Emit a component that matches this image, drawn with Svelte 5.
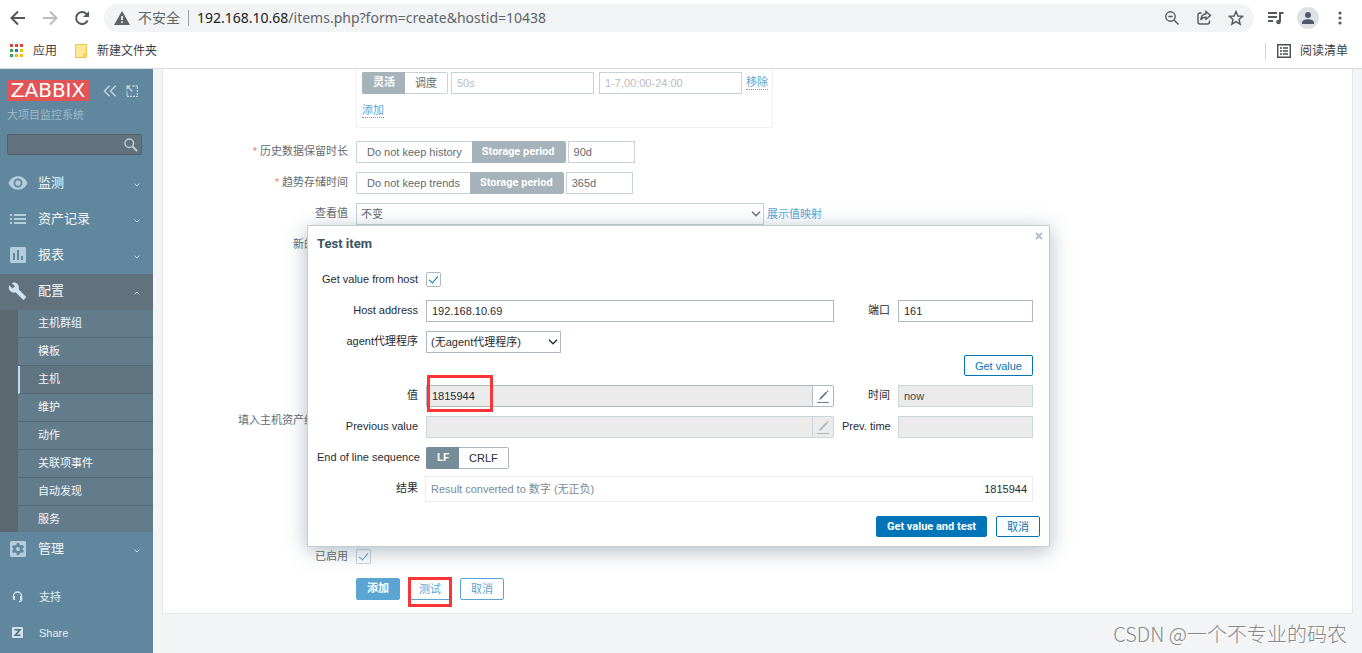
<script lang="ts">
  interface MenuItem {
    label: string
    icon: 'eye' | 'list' | 'chart' | 'wrench' | 'gear'
    open?: boolean
    children?: string[]
  }

  const menu: MenuItem[] = [
    { label: '监测', icon: 'eye' },
    { label: '资产记录', icon: 'list' },
    { label: '报表', icon: 'chart' },
    {
      label: '配置',
      icon: 'wrench',
      open: true,
      children: ['主机群组', '模板', '主机', '维护', '动作', '关联项事件', '自动发现', '服务']
    },
    { label: '管理', icon: 'gear' }
  ]

  const appColors = ['#ea4335', '#ea4335', '#ea4335', '#34a853', '#1a73e8', '#fbbc04', '#34a853', '#fbbc04', '#fbbc04']

  let selectedPage = $state('主机')
  let intervalType = $state('flexible')
  let history = $state('period')
  let trends = $state('period')
  let eol = $state('lf')
  let fromHost = $state(true)
  let enabled = $state(true)
</script>

{#snippet segments(name: string, options: [string, string][], value: string, onpick: (v: string) => void)}
  <span class="segments">
    {#each options as [key, text]}
      <input type="radio" id="{name}-{key}" {name} value={key} checked={value === key} onchange={() => onpick(key)} />
      <label for="{name}-{key}">{text}</label>
    {/each}
  </span>
{/snippet}

{#snippet chevron()}
  <svg class="select-arrow" width="10" height="6" viewBox="0 0 10 6"><path d="M1 .7 5 4.8 9 .7" /></svg>
{/snippet}

{#snippet pencil()}
  <svg width="14" height="14" viewBox="0 0 14 14">
    <path d="M1 13.5h12" stroke="currentColor" />
    <path d="M3 11 4 8.5 10 2.5 11.3 3.8 5.3 9.9zM10.6 1.9 11.4 1.1 12.7 2.4 11.9 3.2z" fill="currentColor" />
  </svg>
{/snippet}

<div class="window">
  <header class="browser">
    <div class="toolbar">
      <button class="tool" aria-label="Back">
        <svg width="16" height="16" viewBox="0 0 16 16"><path d="M15 8H2M8 1.5 1.5 8 8 14.5" /></svg>
      </button>
      <button class="tool faded" aria-label="Forward">
        <svg width="16" height="16" viewBox="0 0 16 16"><path d="M1 8h13M8 1.5 14.5 8 8 14.5" /></svg>
      </button>
      <button class="tool" aria-label="Reload">
        <svg width="16" height="16" viewBox="0 0 16 16"><path d="M13.6 10.5A6 6 0 1 1 12.4 3.9L14 5.5" /><path class="solid" d="M15 1v6H9z" /></svg>
      </button>
      <div class="omnibox">
        <svg width="16" height="14" viewBox="0 0 16 14"><path fill="#5f6368" d="M8 0 16 14H0z" /><path stroke="#fff" stroke-width="1.6" d="M8 5v4M8 10.3v1.6" /></svg>
        <span class="insecure">不安全</span>
        <span class="bar"></span>
        <span class="url"><b>192.168.10.68</b>/items.php?form=create&amp;hostid=10438</span>
        <button class="tool thin" aria-label="Zoom">
          <svg width="16" height="16" viewBox="0 0 16 16"><circle cx="6.5" cy="6.5" r="4.7" /><path d="M10 10l4.5 4.5M4.3 6.5h4.4" /></svg>
        </button>
        <button class="tool thin" aria-label="Share page">
          <svg width="16" height="16" viewBox="0 0 16 16"><path d="M5.5 3H4a2 2 0 0 0-2 2v7a2 2 0 0 0 2 2h7.5a2 2 0 0 0 2-2v-1.5" /><path d="M10 1.5 14.5 5.5 10 9.3V7.2C7.500 7.2 6 8 4.8 10 5 6.5 7 4.3 10 3.8z" /></svg>
        </button>
        <button class="tool thin" aria-label="Bookmark">
          <svg width="16" height="16" viewBox="0 0 16 16"><path d="M8 1.5 9.9 6 14.7 6.3 11 9.4 12.2 14.2 8 11.6 3.8 14.2 5 9.4 1.3 6.3 6.1 6z" /></svg>
        </button>
      </div>
      <button class="tool" aria-label="Media">
        <svg width="17" height="14" viewBox="0 0 17 14"><path d="M1 2h9M1 6h9M1 10h5M13 11V2h3.5" /><circle class="solid" cx="11.5" cy="11" r="2.3" /></svg>
      </button>
      <button class="tool avatar" aria-label="Profile">
        <svg width="14" height="14" viewBox="0 0 14 14"><circle cx="7" cy="4" r="3" /><path d="M1 13v-1.5C1 9 5 8.3 7 8.3s6 .7 6 3.2V13z" /></svg>
      </button>
      <button class="tool" aria-label="Menu">
        <svg width="16" height="16" viewBox="0 0 16 16"><circle class="solid" cx="8" cy="3" r="1.6" /><circle class="solid" cx="8" cy="8" r="1.6" /><circle class="solid" cx="8" cy="13" r="1.6" /></svg>
      </button>
    </div>
    <div class="bookmarks">
      <a href="#apps">
        <svg width="14" height="14" viewBox="0 0 14 14">
          {#each appColors as color, i}
            <rect x={(i % 3) * 5} y={Math.floor(i / 3) * 5} width="3" height="3" fill={color} />
          {/each}
        </svg>
        应用
      </a>
      <a href="#folder">
        <svg width="14" height="14" viewBox="0 0 14 14"><path d="M1.5.5h11v13h-11z" fill="#ffe796" stroke="#ecc94e" /><path d="M10 13.5V10h2.5" fill="none" stroke="#e5b93c" /></svg>
        新建文件夹
      </a>
      <a class="reading" href="#reading">
        <svg width="14" height="14" viewBox="0 0 14 14"><path d="M.7 .7h12.6v12.6H.7zM3 4h2M6 4h5M3 7h2M6 7h5M3 10h2M6 10h5" fill="none" stroke="#4a4d51" stroke-width="1.4" /></svg>
        阅读清单
      </a>
    </div>
  </header>

  <div class="page">
    <aside class="sidebar">
      <div class="brand">
        <a class="logo" href="#dashboard">ZABBIX</a>
        <button aria-label="Collapse sidebar">
          <svg width="14" height="12" viewBox="0 0 14 12"><path d="M6.5.8 1.3 6l5.2 5.2M12.7.8 7.5 6l5.2 5.2" /></svg>
        </button>
        <button aria-label="Hide sidebar">
          <svg width="12" height="12" viewBox="0 0 12 12"><path d="M6.5 1H11.5V11.5H1V6.5" stroke-dasharray="2 1" /><path d="M6.5 6.5 2 2" /><path d="M.5.5h4.500l-4.500 4.500z" fill="#c4d8e5" stroke="none" /></svg>
        </button>
      </div>
      <div class="server">大项目监控系统</div>
      <form class="search">
        <input type="text" aria-label="Search" />
        <svg width="14" height="14" viewBox="0 0 14 14"><circle cx="5.3" cy="5.3" r="4.3" /><path d="M8.5 8.5 13 13" stroke-width="2" /></svg>
      </form>
      <nav>
        {#each menu as item}
          <a class="entry" class:open={item.open} href="#menu">
            <svg class="entry-icon" width="20" height="20" viewBox="0 0 20 20">
              {#if item.icon === 'eye'}
                <path fill-rule="evenodd" d="M.5 10C2.2 6 5.8 3.3 10 3.3S17.8 6 19.5 10C17.8 14 14.2 16.7 10 16.7S2.2 14 .5 10zM10 5.5a4.5 4.5 0 1 0 0 9 4.5 4.5 0 0 0 0-9z" />
                <circle cx="10" cy="10" r="2.7" />
              {:else if item.icon === 'list'}
                <path d="M2 5h2v2H2zM6 5h12v2H6zM2 9h2v2H2zM6 9h12v2H6zM2 13h2v2H2zM6 13h12v2H6z" />
              {:else if item.icon === 'chart'}
                <path fill-rule="evenodd" d="M3.5 2h13A1.5 1.5 0 0 1 18 3.5v13a1.5 1.5 0 0 1-1.5 1.5h-13A1.5 1.5 0 0 1 2 16.5v-13A1.5 1.5 0 0 1 3.5 2zM5 8v7h2V8zM9 5v10h2V5zM13 11v4h2v-4z" />
              {:else if item.icon === 'wrench'}
                <path d="M17.8 15.5 10.6 8.3C11.3 6.5 10.9 4.4 9.4 2.9 7.8 1.3 5.5 1 3.6 1.9L7 5.2 4.7 7.6 1.2 4.2C.2 6.1.7 8.5 2.2 10 3.7 11.5 5.8 11.9 7.6 11.2L14.8 18.4Q15.4 19 16 18.4L17.8 16.7Q18.4 16.1 17.8 15.5z" />
              {:else}
                <path fill-rule="evenodd" d="M3.5 2h13A1.5 1.5 0 0 1 18 3.5v13a1.5 1.5 0 0 1-1.5 1.5h-13A1.5 1.5 0 0 1 2 16.5v-13A1.5 1.5 0 0 1 3.5 2zM8.8 4 8.4 5.7 7 6.5 5.3 6 4 8.1 5.3 9.3V10.7L4 11.9 5.3 14 7 13.5 8.4 14.3 8.8 16H11.2L11.6 14.3 13 13.5 14.7 14 16 11.9 14.7 10.7V9.3L16 8.1 14.7 6 13 6.5 11.6 5.7 11.2 4zM10 8a2 2 0 1 0 0 4 2 2 0 0 0 0-4z" />
              {/if}
            </svg>
            <span>{item.label}</span>
            <svg class="caret" width="6" height="4" viewBox="0 0 6 4"><path d={item.open ? 'M.5 3.5 3 1 5.5 3.5' : 'M.5.5 3 3 5.5.5'} /></svg>
          </a>
          {#if item.open && item.children}
            <div class="submenu">
              {#each item.children as child}
                <a href="#page" class:selected={child === selectedPage} onclick={() => (selectedPage = child)}>{child}</a>
              {/each}
            </div>
          {/if}
        {/each}
      </nav>
      <div class="support">
        <a class="entry" href="#support">
          <svg class="entry-icon" width="20" height="20" viewBox="0 0 20 20"><path d="M5.5 10.500V9a4 4 0 0 1 8 0v3.500q0 2-2.500 2" fill="none" stroke="#d2e1ec" stroke-width="1.300" /><path d="M4.800 9H7v4H6q-1.200 0-1.200-1zM12 9h2.200v3q0 1-1 1H12z" /></svg>
          <span>支持</span>
        </a>
        <a class="entry" href="#share">
          <svg class="entry-icon" width="20" height="20" viewBox="0 0 20 20"><rect x="4" y="4" width="11" height="11" rx="1" /><path d="M6.500 6.700h5.500L7.200 12.300h5.300" fill="none" stroke="#4d7085" stroke-width="1.600" /></svg>
          <span>Share</span>
        </a>
      </div>
    </aside>

    <main>
      <form class="card">
        <div class="row">
          <span class="label"></span>
          <div class="intervals">
            <div class="line">
              {@render segments('interval', [['flexible', '灵活'], ['scheduling', '调度']], intervalType, (v) => (intervalType = v))}
              <input class="delay" type="text" aria-label="间隔" placeholder="50s" />
              <input class="delay" type="text" aria-label="期间" placeholder="1-7,00:00-24:00" />
              <a class="dotted" href="#remove">移除</a>
            </div>
            <a class="dotted" href="#add">添加</a>
          </div>
        </div>
        <div class="row">
          <label class="label required" for="history">历史数据保留时长</label>
          {@render segments('history-mode', [['off', 'Do not keep history'], ['period', 'Storage period']], history, (v) => (history = v))}
          <input class="short" id="history" type="text" value="90d" />
        </div>
        <div class="row">
          <label class="label required" for="trends">趋势存储时间</label>
          {@render segments('trends-mode', [['off', 'Do not keep trends'], ['period', 'Storage period']], trends, (v) => (trends = v))}
          <input class="short" id="trends" type="text" value="365d" />
        </div>
        <div class="row">
          <label class="label" for="valuemap">查看值</label>
          <span class="select wide">
            <select id="valuemap"><option>不变</option></select>
            {@render chevron()}
          </span>
          <a class="mapping" href="#valuemaps">展示值映射</a>
        </div>
        <div class="row">
          <label class="label" for="new-app">新的应用集</label>
          <input class="medium" id="new-app" type="text" />
        </div>
        <div class="row">
          <span class="label"></span>
          <select class="listbox" aria-label="应用集" multiple></select>
        </div>
        <div class="row">
          <label class="label" for="inventory">填入主机资产纪录栏位</label>
          <span class="select wide">
            <select id="inventory"></select>
          </span>
        </div>
        <div class="row">
          <span class="label"></span>
          <textarea aria-label="描述"></textarea>
        </div>
        <div class="row">
          <label class="label" for="enabled">已启用</label>
          <input type="checkbox" id="enabled" bind:checked={enabled} />
        </div>
        <div class="row actions">
          <span class="label"></span>
          <button class="btn primary" type="button">添加</button>
          <span class="marked">
            <button class="btn" type="button">测试</button>
            <span class="mark mark-test"></span>
          </span>
          <button class="btn" type="button">取消</button>
        </div>
      </form>
    </main>
  </div>

  <div class="overlay">
    <div class="dialog" role="dialog" aria-labelledby="dialog-title">
      <div class="dialog-head">
        <h4 id="dialog-title">Test item</h4>
        <button class="close" aria-label="Close">
          <svg width="8" height="8" viewBox="0 0 8 8"><path d="M1 1l6 6M7 1 1 7" /></svg>
        </button>
      </div>
      <form class="test">
        <div class="fields">
          <label for="from-host">Get value from host</label>
          <input type="checkbox" id="from-host" bind:checked={fromHost} />
        </div>
        <div class="fields">
          <label for="address">Host address</label>
          <input id="address" type="text" value="192.168.10.69" />
          <label for="port">端口</label>
          <input id="port" type="text" value="161" />
        </div>
        <div class="fields">
          <label for="proxy">agent代理程序</label>
          <span class="select proxy">
            <select id="proxy"><option>(无agent代理程序)</option></select>
            {@render chevron()}
          </span>
        </div>
        <div class="get-value">
          <button class="btn" type="button">Get value</button>
        </div>
        <div class="fields">
          <label for="value">值</label>
          <span class="multiline marked">
            <input id="value" type="text" value="1815944" readonly />
            <button type="button" aria-label="Edit value">{@render pencil()}</button>
            <span class="mark mark-value"></span>
          </span>
          <label for="time">时间</label>
          <input id="time" type="text" value="now" disabled />
        </div>
        <div class="fields">
          <label for="prev">Previous value</label>
          <span class="multiline">
            <input id="prev" type="text" disabled />
            <button type="button" aria-label="Edit previous value" disabled>{@render pencil()}</button>
          </span>
          <label for="prev-time">Prev. time</label>
          <input id="prev-time" type="text" disabled />
        </div>
        <div class="fields">
          <span class="caption">End of line sequence</span>
          {@render segments('eol', [['lf', 'LF'], ['crlf', 'CRLF']], eol, (v) => (eol = v))}
        </div>
        <div class="fields result">
          <span class="caption">结果</span>
          <div class="result-box">
            <span class="muted">Result converted to 数字 (无正负)</span>
            <output>1815944</output>
          </div>
        </div>
      </form>
      <div class="dialog-foot">
        <button class="btn primary">Get value and test</button>
        <button class="btn">取消</button>
      </div>
    </div>
  </div>

  <div class="watermark">CSDN @一个不专业的码农</div>
</div>

<style>
  :global(body) {
    margin: 0;
    background: #f2f4f6;
  }

  .window {
    --border: #c8d2d7;
    --accent: #5ba5d3;
    --text: #626b70;
    --active: #a6b3bb;
    --bold-font: Roboto, "Noto Sans CJK SC", sans-serif;
    position: relative;
    display: flex;
    flex-direction: column;
    height: 100vh;
    overflow: hidden;
    font: 11px/14px "Liberation Sans", "Noto Sans CJK SC", sans-serif;
    color: var(--text);
  }

  .window * {
    box-sizing: border-box;
  }

  a {
    color: var(--accent);
    text-decoration: none;
  }

  button,
  input,
  select,
  textarea {
    font: inherit;
    color: inherit;
    margin: 0;
  }

  svg {
    flex-shrink: 0;
  }

  /* Browser chrome */

  .browser {
    flex-shrink: 0;
    background: #fff;
    border-bottom: 1px solid #d9dbdf;
    font-family: "Noto Sans", "Noto Sans CJK SC", sans-serif;
  }

  .toolbar {
    display: flex;
    align-items: center;
    gap: 16px;
    height: 36px;
    padding: 0 14px 0 10px;
  }

  .tool {
    display: flex;
    padding: 0;
    border: none;
    background: none;
    color: #54585d;
  }

  .tool svg {
    fill: none;
    stroke: currentColor;
    stroke-width: 2;
  }

  .tool .solid {
    fill: currentColor;
    stroke: none;
  }

  .tool.faded {
    color: #babcbe;
  }

  .tool.thin svg {
    stroke-width: 1.4;
  }

  .omnibox {
    flex: 1;
    display: flex;
    align-items: center;
    gap: 16px;
    height: 28px;
    padding: 0 10px;
    margin: 0 -3px 0 -2px;
    border-radius: 14px;
    background: #f1f3f4;
    font-size: 14px;
    line-height: 20px;
    color: #5f6368;
  }

  .insecure {
    margin-left: -8px;
  }

  .bar {
    width: 1px;
    height: 16px;
    margin: 0 -8px;
    background: #9aa0a6;
  }

  .url {
    flex: 1;
  }

  .url b {
    font-weight: 400;
    color: #202124;
  }

  .avatar {
    padding: 4px;
    margin: 0 -3px;
    border-radius: 50%;
    background: #dee1e6;
  }

  .avatar svg {
    fill: #4e5a6b;
    stroke: none;
  }

  .bookmarks {
    display: flex;
    align-items: center;
    gap: 17px;
    height: 32px;
    padding: 0 14px 2px 10px;
  }

  .bookmarks a {
    display: flex;
    align-items: center;
    gap: 9px;
    font-size: 12px;
    line-height: 16px;
    color: #3c4043;
  }

  .bookmarks .reading {
    margin-left: auto;
    padding-left: 11px;
    border-left: 1px solid #cfd1d4;
  }

  /* Sidebar */

  .page {
    flex: 1;
    display: flex;
    min-height: 0;
  }

  .sidebar {
    width: 153px;
    flex-shrink: 0;
    background: #61879e;
  }

  .brand {
    display: flex;
    align-items: center;
    gap: 9px;
    padding: 11px 7px 0;
  }

  .brand .logo {
    width: 82px;
    margin-right: 5px;
    background: #e35457;
    color: #fff;
    font: 20px/21px "DejaVu Sans", sans-serif;
    text-align: center;
  }

  .brand button {
    display: flex;
    padding: 0;
    border: none;
    background: none;
  }

  .brand svg {
    fill: none;
    stroke: #c4d8e5;
    stroke-width: 1.3;
  }

  .server {
    padding: 7px 7px 0;
    color: #9cb9ca;
  }

  .search {
    position: relative;
    margin: 12px 11px 12px 7px;
    height: 20px;
  }

  .search svg {
    position: absolute;
    right: 4px;
    top: 4px;
    fill: none;
    stroke: #bccbd5;
    stroke-width: 1.5;
  }

  .entry {
    display: flex;
    align-items: center;
    gap: 10px;
    height: 36px;
    padding: 0 13px 2px 8px;
    font-size: 13px;
    line-height: 18px;
    color: #f2f6f9;
  }

  .entry.open {
    background: #61717d;
  }

  .entry-icon {
    fill: #b3cddd;
  }

  .open .entry-icon {
    fill: #d0e3f2;
  }

  .caret {
    margin: 3px 0 0 auto;
    fill: none;
    stroke: #c4d8e5;
  }

  .submenu {
    padding-left: 18px;
    background: #5c686f;
  }

  .submenu a {
    display: block;
    height: 28px;
    padding-left: 20px;
    border-bottom: 1px solid #546975;
    background: #627c8c;
    line-height: 27px;
    color: #f2f6f9;
  }

  .submenu a:last-child {
    height: 26px;
    border-bottom: none;
  }

  .submenu a.selected {
    padding-left: 18px;
    border-left: 2px solid #b3ddfa;
    background: #607482;
  }

  .support {
    padding-top: 12px;
  }

  .support .entry {
    gap: 11px;
    font-size: 11px;
    color: #e3edf4;
  }

  .support .entry-icon {
    fill: #d2e1ec;
  }

  /* Item form */

  main {
    flex: 1;
    min-width: 0;
    padding: 0 9px;
  }

  .card {
    padding-bottom: 13px;
    border: 1px solid #e4e8ea;
    border-top: none;
    background: #fff;
  }

  .row {
    display: flex;
    align-items: flex-start;
    margin-bottom: 9px;
  }

  .label {
    width: 185px;
    margin-right: 8px;
    flex-shrink: 0;
    line-height: 21px;
    text-align: right;
  }

  .required::before {
    content: '* ';
    color: #e58080;
  }

  .intervals {
    padding: 3px 4px 9px 5px;
    margin-bottom: 4px;
    border: 1px solid #f0f2f3;
    border-top: none;
  }

  .line {
    display: flex;
    align-items: flex-start;
    margin-bottom: 9px;
  }

  .dotted {
    display: inline-block;
    border-bottom: 1px dotted;
  }

  .line .dotted {
    margin: 3px 0 0 2px;
  }

  input[type='text'],
  select,
  textarea {
    height: 22px;
    padding: 0 5px;
    border: 1px solid var(--border);
    border-radius: 0;
    background: #fff;
    outline: none;
  }

  .search input[type='text'] {
    width: 100%;
    height: 21px;
    border: 1px solid #576169;
    border-radius: 2px;
    background: #62727e;
  }

  input::placeholder {
    color: #b9bcbe;
    opacity: 1;
  }

  input.delay {
    width: 143px;
    margin: 0 2px 0 3px;
  }

  .short {
    width: 67px;
    margin-left: 2px;
  }

  .medium {
    width: 408px;
  }

  .row .listbox {
    width: 408px;
    height: 136px;
  }

  .row textarea {
    width: 408px;
    height: 96px;
    resize: none;
  }

  .segments {
    display: flex;
  }

  .segments input {
    position: absolute;
    opacity: 0;
    pointer-events: none;
  }

  .segments label {
    height: 22px;
    padding: 0 10px;
    border: 1px solid var(--border);
    background: #fff;
    line-height: 20px;
  }

  .segments label:first-of-type {
    border-right: none;
    border-radius: 2px 0 0 2px;
  }

  .segments label:last-of-type {
    border-left: none;
    border-radius: 0 2px 2px 0;
  }

  .segments input:checked + label {
    border-color: var(--active);
    background: var(--active);
    color: #fff;
    font-family: var(--bold-font);
    font-weight: 700;
  }

  .select {
    position: relative;
    display: flex;
  }

  .select select {
    width: 100%;
    padding: 0 20px 0 4px;
    appearance: none;
  }

  .select.wide {
    width: 408px;
  }

  .select-arrow {
    position: absolute;
    right: 3px;
    top: 8px;
    fill: none;
    stroke: currentColor;
    stroke-width: 1.3;
  }

  .mapping {
    margin: 4px 0 0 3px;
  }

  input[type='checkbox'] {
    display: grid;
    place-content: center;
    width: 15px;
    height: 15px;
    margin-top: 3px;
    border: 1px solid var(--border);
    border-radius: 2px;
    background: #fff;
    appearance: none;
  }

  input[type='checkbox']:checked::before {
    content: '';
    width: 4px;
    height: 8px;
    margin-bottom: 2px;
    border: solid var(--accent);
    border-width: 0 1px 1px 0;
    rotate: 40deg;
  }

  .btn {
    height: 22px;
    padding: 0 10px;
    border: 1px solid var(--accent);
    border-radius: 2px;
    background: #fff;
    color: var(--accent);
    line-height: 18px;
  }

  .btn.primary {
    background: var(--accent);
    color: #fff;
    font-family: var(--bold-font);
    font-weight: 700;
  }

  .actions {
    margin: 11px 0 0;
  }

  .actions .marked {
    margin: 0 8px;
  }

  .marked {
    position: relative;
  }

  .mark {
    position: absolute;
    border: 3px solid #fb3438;
    pointer-events: none;
  }

  .mark-test {
    inset: -1px 0 -7px;
  }

  .mark-value {
    left: 1px;
    top: -10px;
    width: 66px;
    height: 37px;
  }

  /* Test dialog */

  .overlay {
    position: absolute;
    inset: 225px 5px auto 0;
    display: flex;
    justify-content: center;
    pointer-events: none;
  }

  .dialog {
    --border: #acbbc2;
    --accent: #0275b8;
    --text: #1f2c33;
    --active: #768d99;
    width: 743px;
    padding: 9px;
    border: 1px solid #c3ced4;
    background: #fff;
    box-shadow: 0 4px 20px rgba(60, 90, 110, 0.4);
    color: var(--text);
    pointer-events: auto;
  }

  .dialog-head {
    display: flex;
    justify-content: space-between;
    align-items: flex-start;
    height: 34px;
  }

  h4 {
    margin: 0;
    font-family: var(--bold-font);
    font-size: 13px;
    line-height: 17px;
    color: #3c5563;
  }

  .close {
    display: flex;
    margin: -3px -3px 0 0;
    padding: 0;
    border: none;
    background: none;
  }

  .close svg {
    stroke: #b4c0c7;
    stroke-width: 2;
  }

  .test {
    padding-right: 7px;
  }

  .fields {
    display: grid;
    grid-template-columns: 101px 1fr 48px 135px;
    column-gap: 8px;
    margin-bottom: 9px;
  }

  .fields > label,
  .caption {
    line-height: 21px;
    text-align: right;
    white-space: nowrap;
  }

  .fields > input[type='text'] {
    width: 100%;
  }

  .fields > input[type='checkbox'] {
    margin-bottom: 4px;
  }

  .proxy {
    width: 135px;
  }

  .get-value {
    display: flex;
    justify-content: flex-end;
    margin: -7px 0 9px;
  }

  .multiline {
    display: flex;
  }

  .multiline input[type='text'] {
    flex: 1;
    background: #ebebeb;
  }

  .multiline button {
    display: flex;
    width: 22px;
    height: 22px;
    padding: 3px;
    margin-left: -1px;
    border: 1px solid var(--border);
    border-radius: 0 2px 2px 0;
    background: #fff;
    color: #6b818d;
  }

  .dialog input[type='text']:disabled,
  .multiline button:disabled {
    border-color: #ccd5d9;
    background: #ebebeb;
    color: #3f484d;
  }

  .multiline button:disabled {
    color: #acb5ba;
  }

  .result {
    margin: -2px 0 14px;
  }

  .result .caption {
    line-height: 25px;
  }

  .result-box {
    grid-column: 2 / -1;
    display: flex;
    justify-content: space-between;
    height: 26px;
    margin-left: -1px;
    padding: 0 5px;
    border: 1px solid #ebeef0;
    line-height: 24px;
  }

  .muted {
    color: #768d99;
  }

  .dialog-foot {
    display: flex;
    justify-content: flex-end;
    gap: 9px;
  }

  .dialog .btn {
    height: 21px;
  }

  .watermark {
    position: absolute;
    right: 15px;
    bottom: 5px;
    font: 300 20px/28px "Noto Sans CJK SC", sans-serif;
    color: #85888b;
    text-shadow: 1px 1px 0 #fff;
  }
</style>
